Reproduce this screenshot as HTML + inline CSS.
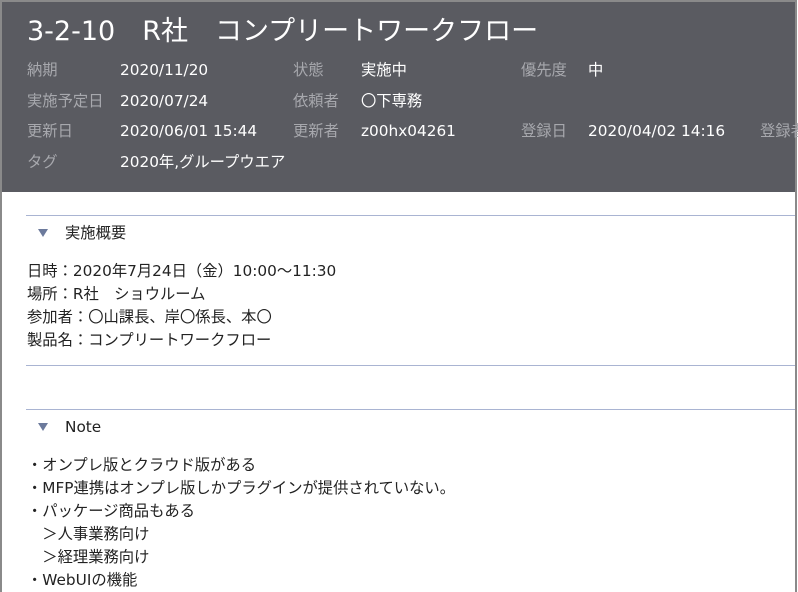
<!DOCTYPE html>
<html><head><meta charset="utf-8"><style>
*{margin:0;padding:0;box-sizing:border-box}
body{width:798px;height:592px;overflow:hidden;background:#fff;font-family:"DejaVu Sans","Noto Sans CJK JP",sans-serif;position:relative}
.frame{position:absolute;left:0;top:0;width:797px;height:592px;border-left:2px solid #8a8a8a;border-top:2px solid #8a8a8a;border-right:2px solid #8a8a8a}
.hd{position:absolute;left:2px;top:2px;width:793px;height:190px;background:#5a5b61}
.t{position:absolute;white-space:nowrap;font-size:15.3px;line-height:16px}
.title{position:absolute;left:27px;top:17px;font-size:27px;color:#fff;white-space:nowrap;line-height:30px}
.lb{color:#a7a8ad}.v{color:#fff}
.line{position:absolute;left:26px;width:769px;height:1px;background:#a9b4d2}
.tri{position:absolute;width:0;height:0;border-left:5px solid transparent;border-right:5px solid transparent;border-top:8px solid #6c7a9c}
.b{color:#222}
</style></head><body>
<div class="hd"></div>
<div class="frame"></div>
<div class="title">3-2-10　R社　コンプリートワークフロー</div>
<div class="t lb" style="left:27px;top:62px">納期</div><div class="t v" style="left:120px;top:62px">2020/11/20</div>
<div class="t lb" style="left:293px;top:62px">状態</div><div class="t v" style="left:361px;top:62px">実施中</div>
<div class="t lb" style="left:521px;top:62px">優先度</div><div class="t v" style="left:588px;top:62px">中</div>
<div class="t lb" style="left:27px;top:93px">実施予定日</div><div class="t v" style="left:120px;top:93px">2020/07/24</div>
<div class="t lb" style="left:293px;top:93px">依頼者</div><div class="t v" style="left:361px;top:93px">〇下専務</div>
<div class="t lb" style="left:27px;top:123px">更新日</div><div class="t v" style="left:120px;top:123px">2020/06/01 15:44</div>
<div class="t lb" style="left:293px;top:123px">更新者</div><div class="t v" style="left:361px;top:123px">z00hx04261</div>
<div class="t lb" style="left:521px;top:123px">登録日</div><div class="t v" style="left:588px;top:123px">2020/04/02 14:16</div>
<div class="t lb" style="left:760px;top:123px">登録者</div>
<div class="t lb" style="left:27px;top:154px">タグ</div><div class="t v" style="left:120px;top:154px">2020年,グループウエア</div>
<div class="line" style="top:215px"></div>
<div class="tri" style="left:38px;top:229px"></div>
<div class="t b" style="left:65px;top:225px">実施概要</div>
<div class="t b" style="left:27px;top:263px">日時：2020年7月24日（金）10:00〜11:30</div>
<div class="t b" style="left:27px;top:286px">場所：R社　ショウルーム</div>
<div class="t b" style="left:27px;top:309px">参加者：〇山課長、岸〇係長、本〇</div>
<div class="t b" style="left:27px;top:332px">製品名：コンプリートワークフロー</div>
<div class="line" style="top:365px"></div>
<div class="line" style="top:409px"></div>
<div class="tri" style="left:38px;top:423px"></div>
<div class="t b" style="left:65px;top:419px">Note</div>
<div class="t b" style="left:27px;top:457px">・オンプレ版とクラウド版がある</div>
<div class="t b" style="left:27px;top:480px">・MFP連携はオンプレ版しかプラグインが提供されていない。</div>
<div class="t b" style="left:27px;top:503px">・パッケージ商品もある</div>
<div class="t b" style="left:27px;top:526px">　＞人事業務向け</div>
<div class="t b" style="left:27px;top:549px">　＞経理業務向け</div>
<div class="t b" style="left:27px;top:572px">・WebUIの機能</div>
</body></html>
